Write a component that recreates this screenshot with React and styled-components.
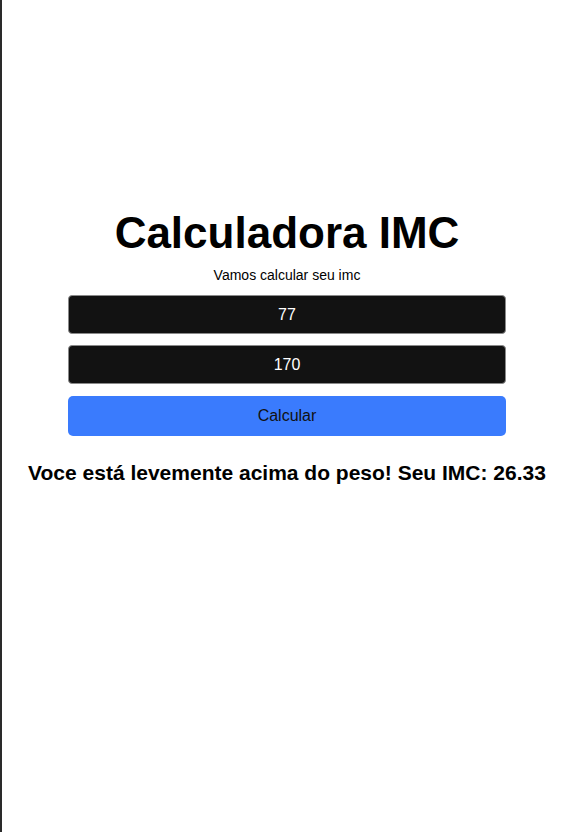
import React, { useState } from 'react';
import styled, { createGlobalStyle } from 'styled-components';

const GlobalStyle = createGlobalStyle`
  html, body {
    margin: 0;
    padding: 0;
    background: #fff;
  }
  body {
    font-family: "Liberation Sans", Arial, sans-serif;
  }
`;

const Page = styled.div`
  min-height: 832px;
  box-sizing: border-box;
  box-shadow: inset 2px 0 0 #2a2a2a;
  display: flex;
  flex-direction: column;
  align-items: center;
  padding: 208px 2px 0 0;
`;

const Title = styled.h1`
  margin: 0;
  font-size: 44px;
  font-weight: bold;
  color: #000;
`;

const Subtitle = styled.p`
  margin: 9px 0 0;
  font-size: 14px;
  color: #000;
`;

const Form = styled.div`
  width: 438px;
  margin-top: 12px;
  display: flex;
  flex-direction: column;
  gap: 11px;
`;

const Field = styled.input`
  box-sizing: border-box;
  height: 39px;
  width: 100%;
  background: #121212;
  color: #fff;
  border: 1px solid #8a8a8a;
  border-radius: 4px;
  font-family: "Liberation Sans", Arial, sans-serif;
  font-size: 16px;
  text-align: center;
  outline: none;
`;

const Button = styled.button`
  height: 40px;
  margin-top: 1px;
  width: 100%;
  background: #3a7bfd;
  color: #111;
  border: none;
  border-radius: 5px;
  font-family: "Liberation Sans", Arial, sans-serif;
  font-size: 16px;
  cursor: pointer;
`;

const Result = styled.h3`
  margin: 25px 0 0;
  font-size: 21px;
  font-weight: bold;
  color: #000;
`;

export default function App() {
  const [peso, setPeso] = useState('77');
  const [altura, setAltura] = useState('170');

  return (
    <Page>
      <GlobalStyle />
      <Title>Calculadora IMC</Title>
      <Subtitle>Vamos calcular seu imc</Subtitle>
      <Form>
        <Field value={peso} onChange={e => setPeso(e.target.value)} />
        <Field value={altura} onChange={e => setAltura(e.target.value)} />
        <Button>Calcular</Button>
      </Form>
      <Result>Voce está levemente acima do peso! Seu IMC: 26.33</Result>
    </Page>
  );
}
